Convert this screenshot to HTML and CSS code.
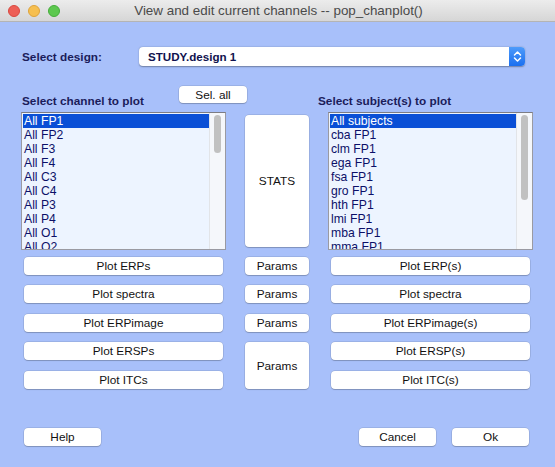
FILE: index.html
```html
<!DOCTYPE html>
<html>
<head>
<meta charset="utf-8">
<link rel="stylesheet" href="styles.css">
</head>
<body>
<div class="window">
  <div class="titlebar">
    <div class="lights">
      <span class="light red"></span>
      <span class="light yellow"></span>
      <span class="light green"></span>
    </div>
    <div class="title">View and edit current channels -- pop_chanplot()</div>
  </div>
  <div class="content">
    <div class="design-row">
      <div class="label design-label">Select design:</div>
      <div class="select">
        <span class="select-text">STUDY.design 1</span>
        <span class="stepper">
          <svg width="15" height="19" viewBox="0 0 15 19">
            <path d="M4.5 8 L7.5 5 L10.5 8" fill="none" stroke="#fff" stroke-width="1.5" stroke-linecap="round" stroke-linejoin="round"/>
            <path d="M4.5 11 L7.5 14 L10.5 11" fill="none" stroke="#fff" stroke-width="1.5" stroke-linecap="round" stroke-linejoin="round"/>
          </svg>
        </span>
      </div>
    </div>

    <div class="head-row">
      <div class="label chan-label">Select channel to plot</div>
      <button class="btn selall">Sel. all</button>
      <div class="label subj-label">Select subject(s) to plot</div>
    </div>

    <div class="grid">
      <div class="listbox left-list">
        <div class="items">
          <div class="item sel">All FP1</div>
          <div class="item">All FP2</div>
          <div class="item">All F3</div>
          <div class="item">All F4</div>
          <div class="item">All C3</div>
          <div class="item">All C4</div>
          <div class="item">All P3</div>
          <div class="item">All P4</div>
          <div class="item">All O1</div>
          <div class="item">All O2</div>
        </div>
        <div class="scroll"><div class="thumb thumb-left"></div></div>
      </div>
      <div class="stats-cell"><button class="btn stats">STATS</button></div>
      <div class="listbox right-list">
        <div class="items">
          <div class="item sel">All subjects</div>
          <div class="item">cba FP1</div>
          <div class="item">clm FP1</div>
          <div class="item">ega FP1</div>
          <div class="item">fsa FP1</div>
          <div class="item">gro FP1</div>
          <div class="item">hth FP1</div>
          <div class="item">lmi FP1</div>
          <div class="item">mba FP1</div>
          <div class="item">mma FP1</div>
        </div>
        <div class="scroll"><div class="thumb thumb-right"></div></div>
      </div>

      <div class="btn-grid">
        <button class="btn wide l">Plot ERPs</button>
        <button class="btn mid">Params</button>
        <button class="btn wide r">Plot ERP(s)</button>

        <button class="btn wide l">Plot spectra</button>
        <button class="btn mid">Params</button>
        <button class="btn wide r">Plot spectra</button>

        <button class="btn wide l">Plot ERPimage</button>
        <button class="btn mid">Params</button>
        <button class="btn wide r">Plot ERPimage(s)</button>

        <button class="btn wide l">Plot ERSPs</button>
        <button class="btn mid span2">Params</button>
        <button class="btn wide r">Plot ERSP(s)</button>

        <button class="btn wide l">Plot ITCs</button>
        <button class="btn wide r">Plot ITC(s)</button>
      </div>
    </div>

    <div class="bottom-row">
      <button class="btn small">Help</button>
      <div class="spacer"></div>
      <button class="btn small">Cancel</button>
      <button class="btn small">Ok</button>
    </div>
  </div>
</div>
</body>
</html>
```

FILE: styles.css
```css
* { box-sizing: border-box; }
html, body { margin: 0; padding: 0; }
body {
  width: 555px;
  height: 467px;
  overflow: hidden;
  font-family: "Liberation Sans", Arial, sans-serif;
  background: #a8c0fa;
}
.window {
  width: 555px;
  height: 467px;
  background: #a8c0fa;
  display: flex;
  flex-direction: column;
}
.titlebar {
  height: 22px;
  background: linear-gradient(#ececec, #d6d6d6);
  border-bottom: 1px solid #b4b4b4;
  display: flex;
  align-items: center;
  position: relative;
}
.lights {
  display: flex;
  gap: 8px;
  padding-left: 8px;
  position: absolute;
  left: 0;
  top: 5px;
}
.light {
  width: 12px;
  height: 12px;
  border-radius: 50%;
  display: block;
}
.red { background: #ed5f56; border: 0.5px solid #d9483f; }
.yellow { background: #f6bf4f; border: 0.5px solid #dea33a; }
.green { background: #5dc84f; border: 0.5px solid #45ad3a; }
.title {
  flex: 1;
  text-align: center;
  font-size: 13.4px;
  color: #4a4a4a;
  padding-left: 2px;
  line-height: 22px;
}
.content {
  flex: 1;
  display: flex;
  flex-direction: column;
}
.label {
  font-weight: bold;
  font-size: 11.8px;
  color: #1b1c5a;
}
.design-row {
  display: flex;
  align-items: center;
  margin-top: 25px;
  height: 19px;
  padding-left: 22px;
}
.design-label { width: 117px; padding-top: 1px; }
.select {
  width: 386px;
  height: 19px;
  background: #fff;
  border-radius: 4px;
  box-shadow: 0 0.5px 1.5px rgba(0,0,0,0.35);
  display: flex;
  align-items: center;
  justify-content: space-between;
  padding-left: 9px;
}
.select-text {
  font-weight: bold;
  font-size: 11.6px;
  color: #10124e;
}
.stepper {
  width: 16px;
  height: 19px;
  background: linear-gradient(#4e9bfa, #1a6ff0);
  border-radius: 0 4px 4px 0;
  display: flex;
  align-items: center;
  justify-content: center;
}
.head-row {
  display: flex;
  align-items: flex-end;
  margin-top: 20px;
  height: 17px;
  padding-left: 22px;
}
.chan-label { width: 157px; line-height: 12px; margin-bottom: -4px; }
.subj-label { margin-left: 71px; line-height: 12px; margin-bottom: -4px; }
.btn {
  font-family: "Liberation Sans", Arial, sans-serif;
  font-size: 11.8px;
  color: #111;
  background: #fff;
  border: none;
  border-radius: 4px;
  box-shadow: 0 0 0 0.5px rgba(0,0,0,0.16), 0 1px 1px rgba(0,0,0,0.18);
  padding: 0;
  margin: 0;
  display: flex;
  align-items: center;
  justify-content: center;
}
.selall { width: 68px; height: 17px; }
.grid {
  display: grid;
  grid-template-columns: 205px 64px 205px;
  column-gap: 19px;
  padding-left: 21px;
  margin-top: 9px;
}
.listbox {
  height: 138px;
  background: #edf4ff;
  border: 1px solid #9a9aa2;
  border-top-color: #7c7c84;
  display: flex;
  overflow: hidden;
}
.items {
  flex: 1;
  padding: 1px 0 0 1px;
  overflow: hidden;
}
.item {
  height: 14px;
  line-height: 14px;
  font-size: 12.2px;
  color: #0c1068;
  padding-left: 1px;
  white-space: nowrap;
}
.item.sel {
  background: #0a4fd6;
  color: #fff;
}
.scroll {
  width: 16px;
  background: #f5f7fb;
  border-left: 1px solid #e2e4e8;
  padding: 2px 0 0 4px;
}
.thumb {
  width: 7px;
  background: #c1c1c1;
  border-radius: 4px;
}
.thumb-left { height: 38px; }
.thumb-right { height: 85px; }
.stats-cell {
  display: flex;
  padding-top: 3px;
  height: 138px;
}
.stats { width: 64px; height: 132px; }
.btn-grid {
  grid-column: 1 / 4;
  display: grid;
  grid-template-columns: 205px 64px 205px;
  grid-auto-rows: 18px;
  column-gap: 19px;
  row-gap: 10.5px;
  margin-top: 6.5px;
}
.wide { width: 199px; height: 18px; margin-left: 3px; }
.wide.l { grid-column: 1; }
.wide.r { grid-column: 3; }
.mid { grid-column: 2; width: 64px; height: 18px; }
.mid.span2 { grid-row: span 2; height: 47px; }
.bottom-row {
  display: flex;
  margin-top: 39px;
  padding-left: 24px;
  height: 18px;
}
.small { width: 77px; height: 18px; }
.spacer { flex: 1; }
.bottom-row .small:last-child { margin-left: 16px; margin-right: 26px; }
```
